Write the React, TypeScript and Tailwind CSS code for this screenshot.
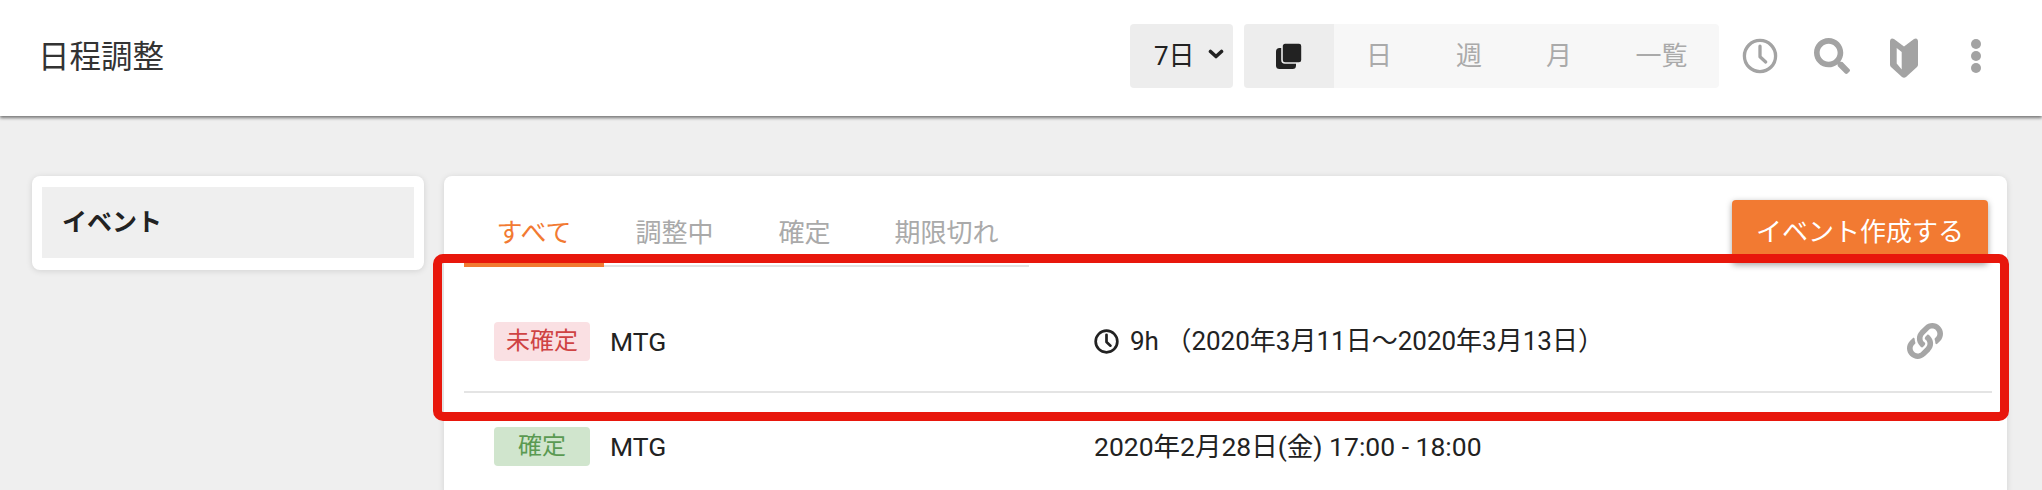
import { FaLink, FaSearch } from "react-icons/fa";

const Clock = ({ className, strokeWidth = 2.2 }: { className: string; strokeWidth?: number }) => (
  <svg viewBox="0 0 24 24" fill="none" stroke="currentColor" strokeWidth={strokeWidth} className={className}>
    <circle cx="12" cy="12" r="10.4" />
    <path d="M12 5.5V12.5L15.8 16" strokeLinecap="round" strokeLinejoin="round" />
  </svg>
);

const tabs = [
  { label: "すべて", width: "w-[140px]" },
  { label: "調整中", width: "w-[141px]" },
  { label: "確定", width: "w-[119px]" },
  { label: "期限切れ", width: "w-[165px]" },
];
const views = ["日", "週", "月", "一覧"];

const Header = () => (
  <header className="relative z-10 flex h-[116px] items-center justify-between bg-white pb-[4px] pl-[38px] pr-[30px] shadow-[0_2px_3px_rgba(0,0,0,0.5)]">
    <h1 className="mt-[4px] text-[31.5px] leading-none font-normal text-[#333]">日程調整</h1>
    <div className="flex items-center">
      <div className="flex h-[64px] w-[103px] items-center gap-[13px] rounded bg-[#ededed] pl-[24px] text-[26px] text-[#222]">
        7日
        <svg viewBox="0 0 16 10" className="mb-[4px] h-[10px] w-[16px]" fill="none" stroke="currentColor" strokeWidth="3.6">
          <path d="M2.5 2.5L8 7.5L13.5 2.5" strokeLinecap="round" strokeLinejoin="round" />
        </svg>
      </div>
      <div className="ml-[11px] flex h-[64px] overflow-hidden rounded bg-[#f7f7f7] text-[26px] text-[#aaa]">
        <div className="flex w-[90px] items-center justify-center bg-[#ededed]">
          <svg viewBox="0 0 26 26" className="h-[26px] w-[26px]" fill="#222">
            <rect x="0" y="5" width="20" height="21" rx="3.5" />
            <rect x="6" y="0" width="20" height="20" rx="3" stroke="#ededed" strokeWidth="1.6" />
          </svg>
        </div>
        {views.map((v) => (
          <div key={v} className={`flex items-center justify-center ${v === "一覧" ? "w-[115px]" : "w-[90px]"}`}>
            {v}
          </div>
        ))}
      </div>
      <div className="ml-[5px] flex items-center text-[#a3a3a3]">
        <div className="flex w-[72px] justify-center">
          <Clock className="h-[36px] w-[36px]" />
        </div>
        <div className="flex w-[72px] justify-center">
          <FaSearch className="h-[36px] w-[36px]" />
        </div>
        <div className="flex w-[72px] justify-center">
          <svg viewBox="0 0 28 40" className="mt-[3px] h-[40px] w-[28px]" fill="currentColor">
            <path
              d="M0 3.5C0 .5 2 -.3 4 1L14 8.5L24 1C26 -.3 28 .5 28 3.5V26.5Q28 28 27 29L16 39Q14 40.5 12 39L1 29Q0 28 0 26.5ZM6.7 10V25.5L11.7 31.5V14Z"
              fillRule="evenodd"
            />
          </svg>
        </div>
        <div className="flex w-[72px] justify-center">
          <svg viewBox="0 0 10 34" className="h-[34px] w-[10px]" fill="currentColor">
            <circle cx="5" cy="5" r="5" />
            <circle cx="5" cy="17" r="5" />
            <circle cx="5" cy="29" r="5" />
          </svg>
        </div>
      </div>
    </div>
  </header>
);

const Row = ({ label, badge, children, link }: { label: string; badge: string; children: React.ReactNode; link?: boolean }) => (
  <div className="flex h-[102px] items-center border-b-2 border-[#e4e4e4] pl-[30px] pr-[49px] text-[#222]">
    <span className={`flex h-[39px] w-[96px] items-center justify-center rounded text-[24px] ${badge}`}>{label}</span>
    <span className="mt-[3px] ml-[20px] w-[484px] text-[26.5px] leading-none">MTG</span>
    <div className="flex flex-1 items-center leading-none">{children}</div>
    {link && <FaLink className="h-[36px] w-[36px] text-[#a6a6a6]" />}
  </div>
);

export default function App() {
  return (
    <div className="h-[490px] overflow-hidden bg-[#efefef] font-['Roboto','Noto_Sans_CJK_JP',sans-serif]">
      <Header />
      <main className="flex items-start gap-[20px] pt-[60px] pl-[32px] pr-[35px]">
        <aside className="w-[392px] rounded-lg bg-white px-[10px] pt-[11px] pb-[12px] shadow-[0_1px_6px_rgba(0,0,0,0.12)]">
          <div className="flex h-[71px] items-center bg-[#efefef] px-[20px] text-[25px] font-bold text-[#222]">イベント</div>
        </aside>
        <section className="relative flex-1 rounded-lg bg-white pt-[24px] pl-[20px] pr-[15px] shadow-[0_1px_6px_rgba(0,0,0,0.12)]">
          <div className="mb-[24px] flex items-start justify-between">
            <div className="flex h-[67px] w-[565px] items-start border-b-2 border-[#e2e2e2] text-[26px]">
              {tabs.map((t, i) => (
                <div
                  key={t.label}
                  className={`flex h-[67px] items-center justify-center border-b-4 pt-[4px] ${t.width} ${
                    i === 0 ? "border-[#f27a32] text-[#f27a32]" : "border-transparent text-[#aaa]"
                  }`}
                >
                  {t.label}
                </div>
              ))}
            </div>
            <button className="mr-[4px] h-[63px] w-[256px] rounded bg-[#f27a32] pt-[2px] text-[26px] text-white shadow-[0_2px_6px_rgba(0,0,0,0.35)]">イベント作成する</button>
          </div>
          <Row label="未確定" badge="bg-[#fae0e3] text-[#cf4343]" link>
            <Clock className="mr-[11px] h-[25px] w-[25px]" strokeWidth={2.6} />
            <span className="text-[26px]">9h （2020年3月11日〜2020年3月13日）</span>
          </Row>
          <div className="mt-[3px]">
            <Row label="確定" badge="bg-[#d0e5cd] text-[#5a9a52]">
              <span className="mt-[2px] text-[26.5px]">2020年2月28日(金) 17:00 - 18:00</span>
            </Row>
          </div>
          {/* 赤枠の注釈 */}
          <div className="absolute top-[78px] right-[-2px] left-[-11px] h-[167px] rounded-[10px] border-[9px] border-[#e8170c]" />
        </section>
      </main>
    </div>
  );
}
